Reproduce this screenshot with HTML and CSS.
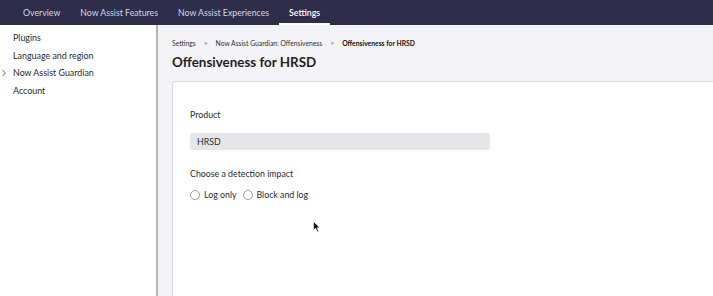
FILE: index.html
```html
<!DOCTYPE html>
<html lang="en">
<head>
<meta charset="utf-8">
<title>Offensiveness for HRSD</title>
<link rel="stylesheet" href="styles.css">
</head>
<body>
<nav class="topnav">
  <a class="tab">Overview</a>
  <a class="tab">Now Assist Features</a>
  <a class="tab">Now Assist Experiences</a>
  <a class="tab active">Settings</a>
</nav>
<div class="layout">
  <aside class="sidebar">
    <div class="side-item">Plugins</div>
    <div class="side-item">Language and region</div>
    <div class="side-item has-chevron">
      <svg class="chev" width="6" height="8" viewBox="0 0 6 8"><path d="M1.5 1 L4.5 4 L1.5 7" fill="none" stroke="#555" stroke-width="0.9"/></svg>
      Now Assist Guardian
    </div>
    <div class="side-item">Account</div>
  </aside>
  <main class="main">
    <div class="crumbs">
      <span>Settings</span>
      <span class="sep">&gt;</span>
      <span>Now Assist Guardian: Offensiveness</span>
      <span class="sep">&gt;</span>
      <span class="current">Offensiveness for HRSD</span>
    </div>
    <h1 class="title">Offensiveness for HRSD</h1>
    <section class="card">
      <div class="label">Product</div>
      <div class="readonly">HRSD</div>
      <div class="label second">Choose a detection impact</div>
      <div class="radios">
        <label class="radio"><span class="circle"></span>Log only</label>
        <label class="radio"><span class="circle"></span>Block and log</label>
      </div>
      <svg class="cursor" width="8" height="12" viewBox="0 0 8 12"><path d="M0.5 0.5 L0.5 9 L2.6 7.2 L4.2 10.8 L5.6 10.2 L4.1 6.8 L6.8 6.8 Z" fill="#111" stroke="#fff" stroke-width="0.6"/></svg>
    </section>
  </main>
</div>
</body>
</html>
```
FILE: styles.css
```css
* { box-sizing: border-box; }
html, body { margin: 0; padding: 0; height: 100%; }
body {
  font-family: Lato, "Noto Sans", "Liberation Sans", sans-serif;
  color: #1f1f27;
  background: #fff;
  overflow: hidden;
  display: flex;
  flex-direction: column;
}
.topnav {
  height: 25px;
  background: #2e2d4a;
  display: flex;
  align-items: stretch;
  padding-left: 13px;
  flex: none;
}
.tab {
  color: #d6d6e0;
  font-size: 8.75px;
  padding: 2px 10px 1px;
  display: flex;
  align-items: center;
  border-bottom: 2px solid transparent;
}
.tab.active {
  color: #fff;
  font-weight: 600;
  border-bottom-color: #fff;
}
.layout {
  flex: 1;
  display: flex;
  min-height: 0;
}
.sidebar {
  width: 158px;
  flex: none;
  border-right: 2px solid #b5b5bb;
  padding-top: 4px;
  background: #fff;
}
.side-item {
  font-size: 8.9px;
  color: #2a2a33;
  height: 17.6px;
  display: flex;
  align-items: center;
  padding-left: 13px;
  position: relative;
}
.chev { position: absolute; left: 1px; top: 5px; }
.main {
  flex: 1;
  background: #f4f4f6;
  padding: 13px 0 0 14px;
  display: flex;
  flex-direction: column;
  min-width: 0;
}
.crumbs {
  font-size: 6.75px;
  color: #2e2e36;
  display: flex;
  gap: 7px;
  align-items: center;
  height: 10px;
}
.crumbs .sep { color: #666; padding: 0 1px; }
.crumbs .current { font-weight: 700; color: #111; }
.title {
  margin: 0;
  font-size: 13.4px;
  font-weight: 700;
  color: #1e1e26;
  margin-top: 5px;
  height: 18px;
  line-height: 18px;
}
.card {
  margin-top: 10px;
  flex: 1;
  background: #fff;
  border: 1px solid #dcdce0;
  border-right: none;
  border-bottom: none;
  border-top-left-radius: 3px;
  padding: 26px 0 0 17px;
  position: relative;
}
.label {
  font-size: 8.8px;
  color: #2a2a33;
  height: 13px;
  line-height: 13px;
}
.label.second { margin-top: 17px; }
.readonly {
  margin-top: 12px;
  width: 300px;
  height: 17px;
  background: #e6e6ea;
  border-radius: 3px;
  font-size: 8.8px;
  padding-left: 7px;
  display: flex;
  align-items: center;
  color: #2a2a33;
}
.radios {
  display: flex;
  gap: 6px;
  margin-top: 8px;
}
.radio {
  display: flex;
  align-items: center;
  gap: 4px;
  font-size: 8.8px;
  color: #2a2a33;
  height: 13px;
}
.circle {
  width: 10px;
  height: 10px;
  border: 1px solid #9d9da5;
  border-radius: 50%;
  background: #fff;
}
.cursor { position: absolute; left: 140px; top: 139px; }
```
